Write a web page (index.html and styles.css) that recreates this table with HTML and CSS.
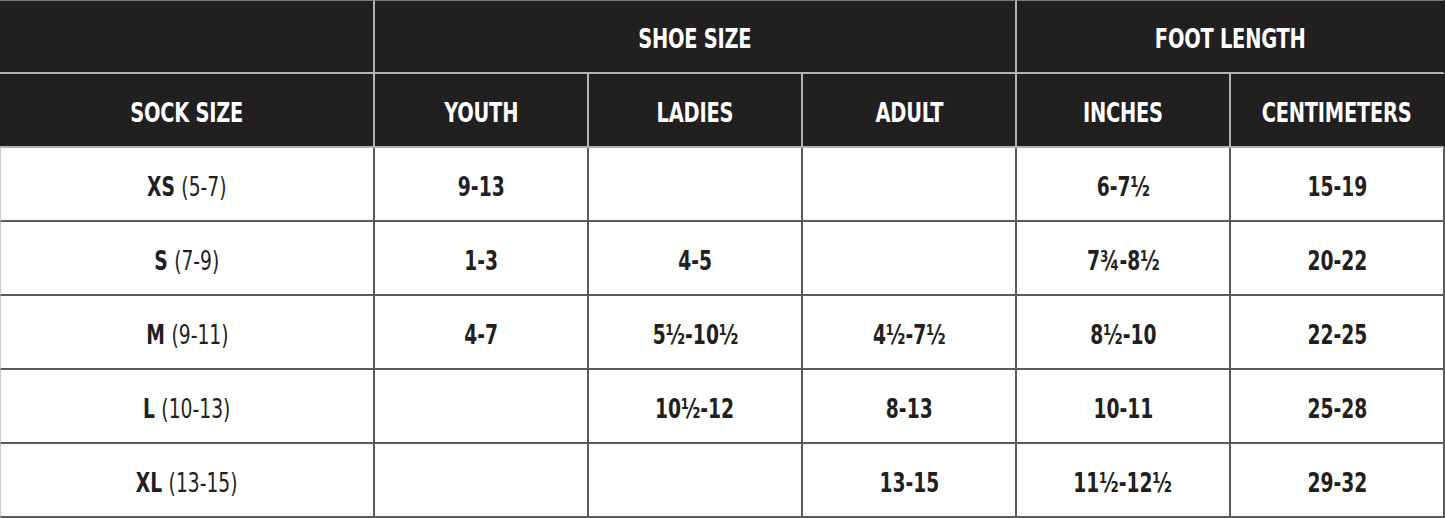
FILE: index.html
```html
<!DOCTYPE html>
<html>
<head>
<meta charset="utf-8">
<link rel="stylesheet" href="styles.css">
</head>
<body>
<table class="chart">
  <colgroup>
    <col class="c-first">
    <col class="c-mid">
    <col class="c-mid">
    <col class="c-mid">
    <col class="c-mid">
    <col class="c-mid">
  </colgroup>
  <thead>
    <tr class="top">
      <th></th>
      <th colspan="3"><span class="t">SHOE SIZE</span></th>
      <th colspan="2"><span class="t">FOOT LENGTH</span></th>
    </tr>
    <tr>
      <th><span class="t">SOCK SIZE</span></th>
      <th><span class="t">YOUTH</span></th>
      <th><span class="t">LADIES</span></th>
      <th><span class="t">ADULT</span></th>
      <th><span class="t">INCHES</span></th>
      <th><span class="t">CENTIMETERS</span></th>
    </tr>
  </thead>
  <tbody>
    <tr>
      <td><span class="t"><b>XS</b> <span class="rng">(5-7)</span></span></td>
      <td><span class="t">9-13</span></td><td></td><td></td><td><span class="t">6-7½</span></td><td><span class="t">15-19</span></td>
    </tr>
    <tr>
      <td><span class="t"><b>S</b> <span class="rng">(7-9)</span></span></td>
      <td><span class="t">1-3</span></td><td><span class="t">4-5</span></td><td></td><td><span class="t">7¾-8½</span></td><td><span class="t">20-22</span></td>
    </tr>
    <tr>
      <td><span class="t"><b>M</b> <span class="rng">(9-11)</span></span></td>
      <td><span class="t">4-7</span></td><td><span class="t">5½-10½</span></td><td><span class="t">4½-7½</span></td><td><span class="t">8½-10</span></td><td><span class="t">22-25</span></td>
    </tr>
    <tr>
      <td><span class="t"><b>L</b> <span class="rng">(10-13)</span></span></td>
      <td></td><td><span class="t">10½-12</span></td><td><span class="t">8-13</span></td><td><span class="t">10-11</span></td><td><span class="t">25-28</span></td>
    </tr>
    <tr>
      <td><span class="t"><b>XL</b> <span class="rng">(13-15)</span></span></td>
      <td></td><td></td><td><span class="t">13-15</span></td><td><span class="t">11½-12½</span></td><td><span class="t">29-32</span></td>
    </tr>
  </tbody>
</table>
</body>
</html>
```
FILE: styles.css
```css
html, body {
  margin: 0;
  padding: 0;
  background: #ffffff;
}

.chart {
  width: 1445px;
  border-collapse: separate;
  border-spacing: 0;
  table-layout: fixed;
  font-family: "DejaVu Sans Condensed", "Liberation Sans", sans-serif;
  font-weight: 700;
  font-size: 26px;
  color: #231f20;
}

.c-first { width: 375px; }
.c-mid { width: 214px; }

.t {
  display: inline-block;
  transform: scaleX(0.8);
  white-space: nowrap;
}

.chart th,
.chart td {
  box-sizing: border-box;
  height: 74px;
  padding: 5px 0 0;
  text-align: center;
  vertical-align: middle;
}

.chart th {
  background: #221f20;
  color: #ffffff;
  border-right: 2px solid #b5b5b5;
  border-bottom: 2px solid #b5b5b5;
  font-size: 27px;
  letter-spacing: -0.3px;
}

.chart .top th {
  border-top: 1px solid #7a7a7a;
  padding-top: 3px;
}

.chart th:last-child {
  border-right: 2px solid #221f20;
}

.chart td {
  border-right: 2px solid #5a5a5a;
  border-bottom: 2px solid #5a5a5a;
}

.chart tbody td:first-child {
  border-left: 1px solid #c8c8c8;
}

.chart td:last-child {
  border-right: 2px solid #5a5a5a;
}

.chart td b {
  font-weight: 700;
}

.rng {
  font-weight: 400;
}
```
